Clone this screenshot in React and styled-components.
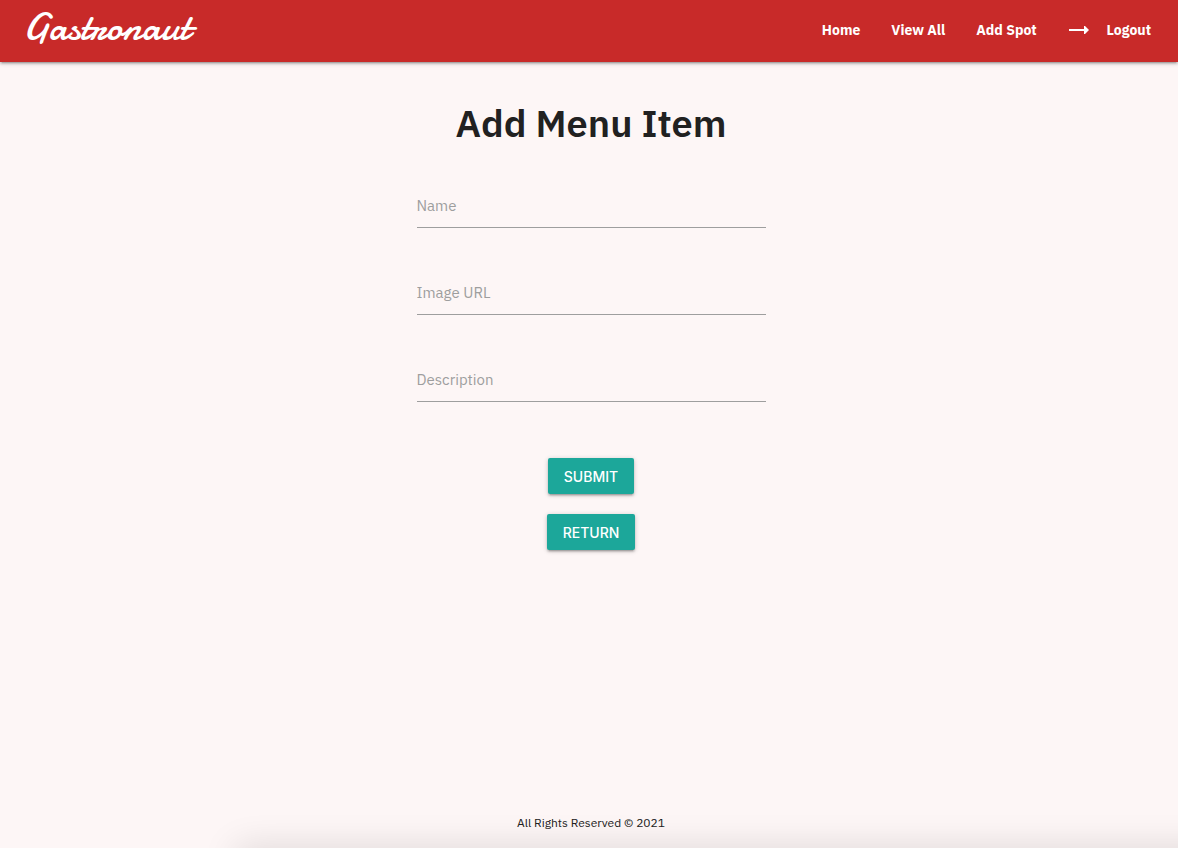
import React from "react";
import styled, { createGlobalStyle } from "styled-components";

const GlobalStyle = createGlobalStyle`
  *, *::before, *::after { box-sizing: border-box; }
  body {
    margin: 0;
    background: #fdf6f6;
    color: #212121;
    font-family: "IBM Plex Sans", Roboto, "Noto Sans", sans-serif;
    font-size: 15px;
    line-height: 24px;
  }
`;

const Page = styled.div`
  min-height: 100vh;
  display: flex;
  flex-direction: column;
  overflow: hidden;
`;

const NavBar = styled.nav`
  height: 62px;
  padding: 0 27px 2px 23px;
  display: flex;
  align-items: center;
  justify-content: space-between;
  background: #c82a29;
  box-shadow: 0 2px 2px rgba(0, 0, 0, 0.14), 0 3px 1px -2px rgba(0, 0, 0, 0.12),
    0 1px 5px rgba(0, 0, 0, 0.2);
`;

const Logo = styled.a`
  color: #fff;
  font-family: "Satisfy", "Damion", Lato, cursive;
  font-size: 40px;
  font-weight: 400;
  line-height: 56px;
  padding-bottom: 4px;
  text-decoration: none;
`;

const NavLinks = styled.div`
  display: flex;
  align-items: center;
  gap: 31px;
`;

const NavLink = styled.a`
  display: flex;
  align-items: center;
  gap: 17px;
  color: #fff;
  font-size: 14px;
  font-weight: 700;
  text-decoration: none;
`;

const Arrow = styled.svg`
  width: 22px;
  height: 10px;
`;

const Main = styled.main`
  flex: 1;
  padding: 33px 0 0 4px;
  display: flex;
  flex-direction: column;
  align-items: center;
`;

const Title = styled.h1`
  margin: 0 0 32px;
  font-size: 38px;
  font-weight: 600;
  line-height: 56px;
`;

const Form = styled.form`
  width: 349px;
  max-width: 100%;
  display: flex;
  flex-direction: column;
  align-items: center;
`;

const Fields = styled.div`
  width: 100%;
  margin-bottom: 56px;
  display: flex;
  flex-direction: column;
  gap: 42px;
`;

const Field = styled.input`
  width: 100%;
  height: 45px;
  padding: 0;
  border: 0;
  border-bottom: 1px solid #9e9e9e;
  outline: 0;
  background: transparent;
  color: #212121;
  font: inherit;
  &::placeholder { color: #9e9e9e; opacity: 1; }
`;

const Button = styled.button`
  height: 36px;
  margin: 0 0 20px;
  padding: 0 16px;
  border: 0;
  border-radius: 2px;
  background: #1ca79a;
  color: #fff;
  font-family: Inter, sans-serif;
  font-size: 14px;
  font-weight: 500;
  text-transform: uppercase;
  box-shadow: 0 2px 2px rgba(0, 0, 0, 0.14), 0 3px 1px -2px rgba(0, 0, 0, 0.12),
    0 1px 5px rgba(0, 0, 0, 0.2);
`;

const Footer = styled.footer`
  padding: 0 0 13px 4px;
  font-size: 12px;
  text-align: center;
`;

const BottomShade = styled.div`
  height: 20px;
  margin: 0 -60px -20px 240px;
  box-shadow: 0 4px 36px 4px rgba(0, 0, 0, 0.14);
`;

const fields = [
  { name: "name", label: "Name" },
  { name: "image", label: "Image URL" },
  { name: "description", label: "Description" },
];

export default function App() {
  return (
    <Page>
      <GlobalStyle />
      <NavBar>
        <Logo href="#">Gastronaut</Logo>
        <NavLinks>
          <NavLink href="#home">Home</NavLink>
          <NavLink href="#spots">View All</NavLink>
          <NavLink href="#add">Add Spot</NavLink>
          <NavLink href="#logout">
            <Arrow viewBox="0 0 22 10" aria-hidden="true">
              <path d="M1 4H16V1H17L21 5L17 9H16V6H1Z" fill="#fff" />
            </Arrow>
            Logout
          </NavLink>
        </NavLinks>
      </NavBar>
      <Main>
        <Title>Add Menu Item</Title>
        <Form onSubmit={(e) => e.preventDefault()}>
          <Fields>
            {fields.map((f) => (
              <Field key={f.name} name={f.name} placeholder={f.label} aria-label={f.label} />
            ))}
          </Fields>
          <Button type="submit">Submit</Button>
          <Button type="button">Return</Button>
        </Form>
      </Main>
      <Footer>All Rights Reserved © 2021</Footer>
      <BottomShade />
    </Page>
  );
}
